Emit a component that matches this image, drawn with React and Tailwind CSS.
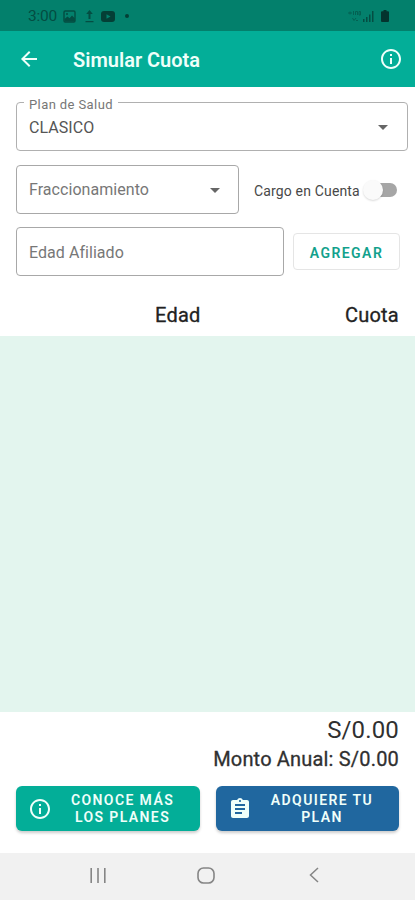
import {
  MdArrowBack,
  MdArrowDropDown,
  MdAssignment,
  MdInfoOutline,
} from "react-icons/md";

function StatusBar() {
  return (
    <div className="flex h-[31px] shrink-0 items-center bg-[#03806c] pl-7 pr-[26px] pt-px text-[#044d42]">
      <span className="w-[35px] pt-0.5 text-[15.5px] leading-none tracking-[-0.2px]">3:00</span>

      {/* Notifications */}
      <svg className="h-[13px] w-[13px]" viewBox="0 0 13 13" fill="none" stroke="currentColor">
        <rect x="1" y="1" width="11" height="11" rx="1.2" strokeWidth="1.4" />
        <path d="M1.5 11.5V9l3-2.5 2 1.7L9 5.5l3 3v3z" fill="currentColor" stroke="none" />
        <circle cx="4" cy="4" r="1" fill="currentColor" stroke="none" />
      </svg>
      <svg className="ml-2 h-[13px] w-[11px]" viewBox="0 0 11 13" fill="currentColor">
        <path d="M5.5 0l3.3 4H6.5v5h-2V4H2.2zM1.5 11h8v1.2h-8z" />
      </svg>
      <svg className="ml-1.5 h-[11px] w-[14px] text-[#043f36]" viewBox="0 0 14 11">
        <rect width="14" height="11" rx="3" fill="currentColor" />
        <path d="M5.5 3.2v4.6l4-2.3z" fill="#03806c" />
      </svg>
      <span className="ml-[10px] h-1 w-1 rounded-full bg-[#043f36]" />

      {/* Signal and battery */}
      <svg className="ml-auto h-3 w-[13px] opacity-60" viewBox="0 0 13 12" fill="none" stroke="currentColor">
        <path d="M0 3h4M2 1.5v3M5.5 1v4M7.5 5V1.5h2V5M11 1.5V5h1.5V1.5zM4.5 8l1.5 2.5L8 8M8 10.5h2" />
      </svg>
      <svg className="ml-[2px] h-3 w-3" viewBox="0 0 12 12" fill="currentColor">
        <path d="M0 9h1.5v3H0zM3 7h1.5v5H3zM6 4.5h1.5V12H6zM9 1h1.5v11H9z" />
      </svg>
      <svg className="ml-1.5 h-3 w-2 text-[#04342e]" viewBox="0 0 8 12" fill="currentColor">
        <path d="M2.5 0h3v1.3H7q1 0 1 1V11q0 1-1 1H1q-1 0-1-1V2.3q0-1 1-1h1.5z" />
      </svg>
    </div>
  );
}

function AppBar() {
  return (
    <header className="flex h-14 shrink-0 items-center bg-[#03ae98] pl-[17px] pr-3 text-[#effffa]">
      <MdArrowBack className="h-6 w-6" />
      <h1 className="ml-8 pt-0.5 text-[20px] font-semibold leading-none">
        Simular Cuota
      </h1>
      <MdInfoOutline className="ml-auto h-6 w-6" />
    </header>
  );
}

function NavigationBar() {
  return (
    <nav className="flex h-[47px] shrink-0 items-center bg-[#f1f1f1] pb-[3px] pl-[90px] text-[#858585]">
      <svg className="h-[15px] w-4" viewBox="0 0 16 15" fill="none" stroke="currentColor" strokeWidth="1.6">
        <path d="M1.2 0v15M8 0v15M14.8 0v15" />
      </svg>
      <svg className="ml-[91px] h-[17px] w-[18px]" viewBox="0 0 18 17" fill="none" stroke="currentColor" strokeWidth="1.6">
        <rect x="1" y="1" width="16" height="15" rx="5.5" />
      </svg>
      <svg className="ml-[94px] h-4 w-[10px]" viewBox="0 0 10 16" fill="none" stroke="currentColor" strokeWidth="1.5">
        <path d="M9 1L1.5 8 9 15" />
      </svg>
    </nav>
  );
}

export default function App() {
  return (
    <div className="flex h-[900px] w-[415px] flex-col overflow-hidden bg-white font-['Roboto',sans-serif]">
      <StatusBar />
      <AppBar />

      {/* Form */}
      <main className="flex min-h-0 flex-1 flex-col">
        <div className="flex shrink-0 flex-col pl-4 pr-[7px] pt-[15px]">
          <div className="relative flex h-[49px] items-center rounded border border-[#b0b0b0] pl-3 pr-3">
            <span className="absolute -top-[7px] left-[7px] bg-white px-[5px] text-[13px] leading-[17px] tracking-[0.4px] text-[#777]">
              Plan de Salud
            </span>
            <span className="pt-0.5 text-[16px] leading-none tracking-[0.05px] text-[#555]">CLASICO</span>
            <MdArrowDropDown className="ml-auto h-6 w-6 text-[#666]" />
          </div>

          <div className="mt-3.5 flex items-center">
            <div className="flex h-[49px] w-[223px] items-center rounded border border-[#a8a8a8] pl-3 pr-[11px]">
              <span className="text-[16px] leading-none tracking-[0.05px] text-[#777]">Fraccionamiento</span>
              <MdArrowDropDown className="ml-auto h-6 w-6 text-[#666]" />
            </div>
            <span className="ml-[15px] pt-0.5 text-[14px] leading-none tracking-[0.16px] text-[#484848]">
              Cargo en Cuenta
            </span>
            <div className="relative ml-[5px] flex h-5 w-8 items-center justify-end">
              <span className="h-[14px] w-[26px] rounded-full bg-[#a6a6a6]" />
              <span className="absolute -left-0.5 top-0 h-5 w-5 rounded-full bg-[#fafafa] shadow-[0_1px_2px_rgba(0,0,0,0.15)]" />
            </div>
          </div>

          <div className="mt-[13px] flex items-center gap-[9px]">
            <div className="flex h-[49px] w-[268px] items-center rounded border border-[#a8a8a8] pl-3">
              <span className="pt-[3px] text-[16px] leading-none tracking-[0.05px] text-[#777]">Edad Afiliado</span>
            </div>
            <button className="h-[37px] w-[107px] rounded border border-[#e5e5e5] pt-0.5 text-[14px] font-semibold leading-none tracking-[1.45px] text-[#12a18c]">
              AGREGAR
            </button>
          </div>
        </div>

        <div className="flex h-[60px] shrink-0 items-center justify-between pl-[155px] pr-4 pt-[18px] text-[20px] leading-none tracking-[0.25px] text-[#222] [-webkit-text-stroke:0.3px_#222]">
          <span>Edad</span>
          <span>Cuota</span>
        </div>

        <div className="flex-1 bg-[#e3f5ee]" />

        {/* Totals */}
        <div className="flex h-[74px] shrink-0 flex-col items-end pr-4 pt-1.5 text-[#303030]">
          <span className="text-[24px] leading-6 tracking-[0.15px]">S/0.00</span>
          <span className="mt-[5px] text-[20px] leading-6 tracking-[0.18px] [-webkit-text-stroke:0.3px_#303030]">
            Monto Anual: S/0.00
          </span>
        </div>

        <div className="flex h-[67px] shrink-0 gap-4 px-4 text-[14px] font-semibold leading-[17px] tracking-[1.4px] text-[#effffa]">
          <button className="flex h-[45px] w-[184px] items-center rounded-md bg-[#03ae98] pl-3 shadow-[0_2px_3px_rgba(0,0,0,0.2)]">
            <MdInfoOutline className="h-6 w-6 shrink-0" />
            <span className="mr-[7px] flex-1 pt-px text-center">
              CONOCE MÁS
              <br />
              LOS PLANES
            </span>
          </button>
          <button className="flex h-[45px] w-[183px] items-center rounded-md bg-[#20679f] pl-3 shadow-[0_2px_3px_rgba(0,0,0,0.2)]">
            <MdAssignment className="h-6 w-6 shrink-0" />
            <span className="mr-[7px] flex-1 pt-px text-center">
              ADQUIERE TU
              <br />
              PLAN
            </span>
          </button>
        </div>
      </main>

      <NavigationBar />
    </div>
  );
}
